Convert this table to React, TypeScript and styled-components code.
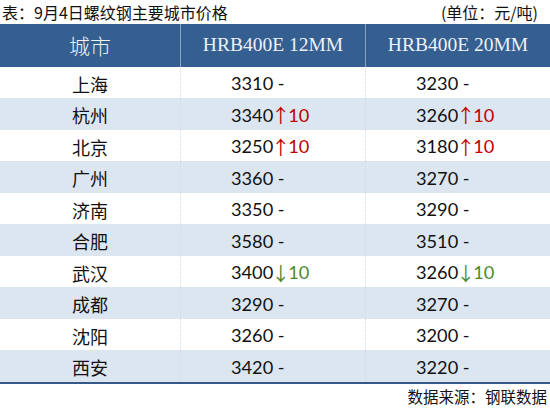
import React from "react";
import styled, { createGlobalStyle } from "styled-components";

const GlobalStyle = createGlobalStyle`
  html, body {
    margin: 0;
    padding: 0;
    background: #fff;
  }
  body {
    font-family: "Noto Sans CJK SC", "Noto Sans", sans-serif;
  }
`;

const Page = styled.div`
  width: 550px;
  height: 409px;
  background: #fff;
  display: flex;
  flex-direction: column;
  overflow: hidden;
`;

const TitleBar = styled.div`
  height: 24px;
  display: flex;
  align-items: center;
  justify-content: space-between;
  padding: 0 12px 0 2px;
  font-size: 16px;
  color: #111;
  line-height: 1;
`;

const Table = styled.div`
  display: grid;
  grid-template-columns: 180px 185px 185px;
  border-bottom: 2px solid #34598a;
`;

const HeadCell = styled.div<{ $first?: boolean }>`
  height: 42.5px;
  background: #355e91;
  color: #eef2f7;
  display: flex;
  align-items: center;
  justify-content: center;
  font-family: "Liberation Serif", "Noto Sans CJK SC", serif;
  font-size: ${(p) => (p.$first ? "21px" : "19.5px")};
  font-weight: ${(p) => (p.$first ? 300 : 400)};
  border-left: ${(p) => (p.$first ? "none" : "1px solid #8aa4c4")};
  box-sizing: border-box;
`;

const CityCell = styled.div<{ $striped: boolean }>`
  height: 31.5px;
  background: ${(p) => (p.$striped ? "#dce6f1" : "#fff")};
  display: flex;
  align-items: center;
  justify-content: center;
  padding-top: 3px;
  box-sizing: border-box;
  font-size: 18px;
  color: #111;
`;

const PriceCell = styled.div<{ $striped: boolean }>`
  height: 31.5px;
  background: ${(p) => (p.$striped ? "#dce6f1" : "#fff")};
  display: flex;
  align-items: center;
  padding: 2px 0 0 50px;
  box-sizing: border-box;
  border-left: 1px dotted #d3dae3;
  font-family: Lato, "Noto Sans", sans-serif;
  font-size: 18.2px;
  color: #111;
  white-space: pre;
`;

const Arrow = styled.span<{ $up: boolean }>`
  display: inline-flex;
  justify-content: center;
  width: 15px;
  font-family: "Noto Sans CJK SC", sans-serif;
  font-size: 19px;
  color: ${(p) => (p.$up ? "#c00000" : "#4c8a2c")};
`;

const Change = styled.span<{ $up: boolean }>`
  color: ${(p) => (p.$up ? "#c00000" : "#4c8a2c")};
`;

const Footer = styled.div`
  flex: 1;
  display: flex;
  align-items: center;
  justify-content: flex-end;
  padding-right: 3px;
  font-size: 15.5px;
  color: #111;
`;

type Price = { value: number; change: number };
type Row = { city: string; a: Price; b: Price };

const rows: Row[] = [
  { city: "上海", a: { value: 3310, change: 0 }, b: { value: 3230, change: 0 } },
  { city: "杭州", a: { value: 3340, change: 10 }, b: { value: 3260, change: 10 } },
  { city: "北京", a: { value: 3250, change: 10 }, b: { value: 3180, change: 10 } },
  { city: "广州", a: { value: 3360, change: 0 }, b: { value: 3270, change: 0 } },
  { city: "济南", a: { value: 3350, change: 0 }, b: { value: 3290, change: 0 } },
  { city: "合肥", a: { value: 3580, change: 0 }, b: { value: 3510, change: 0 } },
  { city: "武汉", a: { value: 3400, change: -10 }, b: { value: 3260, change: -10 } },
  { city: "成都", a: { value: 3290, change: 0 }, b: { value: 3270, change: 0 } },
  { city: "沈阳", a: { value: 3260, change: 0 }, b: { value: 3200, change: 0 } },
  { city: "西安", a: { value: 3420, change: 0 }, b: { value: 3220, change: 0 } },
];

function PriceValue({ price, striped }: { price: Price; striped: boolean }) {
  if (price.change === 0) {
    return <PriceCell $striped={striped}>{price.value} -</PriceCell>;
  }
  const up = price.change > 0;
  return (
    <PriceCell $striped={striped}>
      {price.value}
      <Arrow $up={up}>{up ? "↑" : "↓"}</Arrow>
      <Change $up={up}>{Math.abs(price.change)}</Change>
    </PriceCell>
  );
}

export default function App() {
  return (
    <Page>
      <GlobalStyle />
      <TitleBar>
        <span>表：9月4日螺纹钢主要城市价格</span>
        <span>(单位：元/吨)</span>
      </TitleBar>
      <Table>
        <HeadCell $first>城市</HeadCell>
        <HeadCell>HRB400E 12MM</HeadCell>
        <HeadCell>HRB400E 20MM</HeadCell>
        {rows.map((r, i) => {
          const striped = i % 2 === 1;
          return (
            <React.Fragment key={r.city}>
              <CityCell $striped={striped}>{r.city}</CityCell>
              <PriceValue price={r.a} striped={striped} />
              <PriceValue price={r.b} striped={striped} />
            </React.Fragment>
          );
        })}
      </Table>
      <Footer>数据来源：钢联数据</Footer>
    </Page>
  );
}
